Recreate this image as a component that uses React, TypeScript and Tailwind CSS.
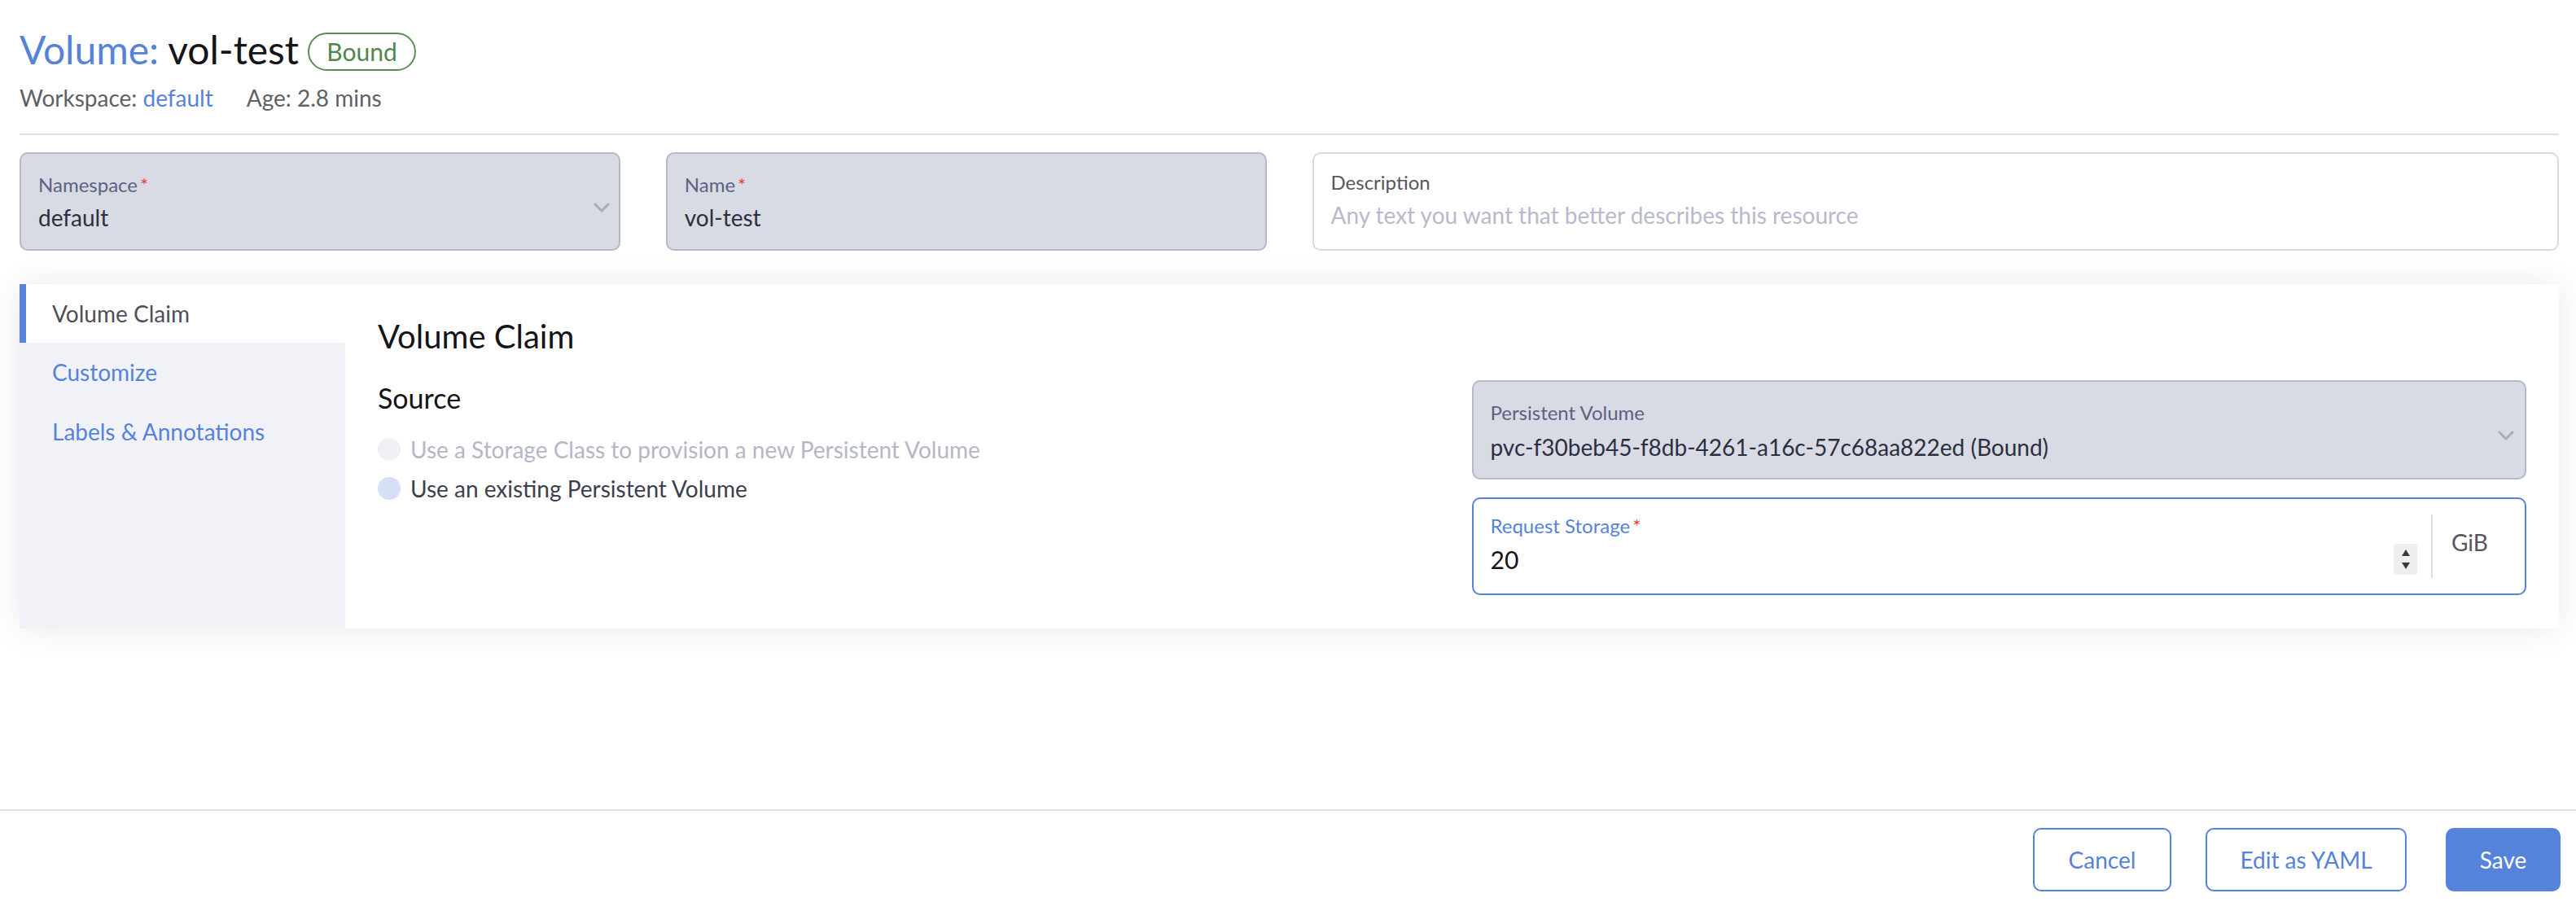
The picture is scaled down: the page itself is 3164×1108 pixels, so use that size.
import React from "react";

const Chevron = ({ className = "" }: { className?: string }) => (
  <svg width="20" height="12" viewBox="0 0 20 12" className={className} fill="none">
    <path d="M2 2 L10 10 L18 2" stroke="#a9abb8" strokeWidth="3" strokeLinecap="round" strokeLinejoin="round" />
  </svg>
);

export default function App() {
  return (
    <div className="w-[3164px] h-[1108px] bg-white flex flex-col font-['Lato','Noto_Sans',sans-serif] overflow-hidden">
      <div className="pl-6 pr-[21px]">
        {/* Title */}
        <div className="pt-[31px] flex items-center h-[91px] box-border">
          <h1 className="text-[48px] leading-[60px] font-normal">
            <span className="text-[#5683da]">Volume: </span>
            <span className="text-[#141419]">vol-test</span>
          </h1>
          <span className="ml-[11px] mt-[4px] inline-flex items-center justify-center h-[47px] w-[133px] rounded-full border-2 border-[#5b8c55] text-[#4f874a] text-[30px] leading-none">
            Bound
          </span>
        </div>
        <div className="mt-[11px] text-[28px] leading-[36px] text-[#5f6068] flex">
          <span>
            Workspace: <span className="text-[#5683da]">default</span>
          </span>
          <span className="ml-[41px]">Age: 2.8 mins</span>
        </div>
        <div className="mt-[26px] h-[2px] bg-[#dcdee7]" />

        {/* Top inputs */}
        <div className="mt-[21px] grid grid-cols-4 gap-x-[56px]">
          <div className="relative h-[121px] rounded-[10px] border-2 border-[#b5b8cb] bg-[#d8dae4] px-[21px] pt-[23px]">
            <div className="text-[24px] leading-[30px] text-[#5b6283]">
              Namespace<span className="text-[#e8413a] ml-[3px]">*</span>
            </div>
            <div className="mt-[7px] text-[28px] leading-[36px] text-[#2c2f40]">default</div>
            <Chevron className="absolute right-[11px] top-[60px]" />
          </div>
          <div className="h-[121px] rounded-[10px] border-2 border-[#b5b8cb] bg-[#d8dae4] px-[21px] pt-[23px]">
            <div className="text-[24px] leading-[30px] text-[#5b6283]">
              Name<span className="text-[#e8413a] ml-[3px]">*</span>
            </div>
            <div className="mt-[7px] text-[28px] leading-[36px] text-[#2c2f40]">vol-test</div>
          </div>
          <div className="col-span-2 h-[121px] rounded-[10px] border-2 border-[#d8dae3] bg-white px-[21px] pt-[20px]">
            <div className="text-[24px] leading-[30px] text-[#55565f]">Description</div>
            <div className="mt-[7px] text-[28px] leading-[36px] text-[#b7b9cc]">
              Any text you want that better describes this resource
            </div>
          </div>
        </div>

        {/* Card */}
        <div className="mt-[41px] flex bg-white shadow-[0_0_40px_rgba(20,20,60,0.09)]">
          <div className="w-[400px] shrink-0 bg-[#f1f2f7] flex flex-col">
            <div className="h-[72px] bg-white border-l-[8px] border-[#5683da] pl-[32px] flex items-center text-[28px] text-[#4f5058]">
              Volume Claim
            </div>
            <div className="h-[72px] pl-[40px] flex items-center text-[28px] text-[#5683da]">Customize</div>
            <div className="h-[74px] pl-[40px] flex items-center text-[28px] text-[#5683da]">
              Labels &amp; Annotations
            </div>
          </div>
          <div className="flex-1 px-10 pt-10 pb-[41px]">
            <h2 className="text-[40px] leading-[48px] text-[#141419] font-normal">Volume Claim</h2>
            <div className="mt-[30px] grid grid-cols-2 gap-x-12">
              <div>
                <h3 className="text-[34px] leading-[44px] text-[#141419] font-normal">Source</h3>
                <div className="mt-[17px] flex flex-col">
                  <div className="h-[48px] flex items-center">
                    <span className="w-[28px] h-[28px] rounded-full bg-[#f0f0f4]" />
                    <span className="ml-[12px] text-[28px] text-[#b5b7c6]">
                      Use a Storage Class to provision a new Persistent Volume
                    </span>
                  </div>
                  <div className="h-[48px] flex items-center">
                    <span className="w-[28px] h-[28px] rounded-full bg-[#d5dff6]" />
                    <span className="ml-[12px] text-[28px] text-[#3c3f4e]">Use an existing Persistent Volume</span>
                  </div>
                </div>
              </div>
              <div className="flex flex-col gap-[22px]">
                <div className="relative h-[122px] rounded-[10px] border-2 border-[#b5b8cb] bg-[#d8dae4] px-[21px] pt-[23px]">
                  <div className="text-[24px] leading-[30px] text-[#5b6283]">Persistent Volume</div>
                  <div className="mt-[9px] text-[28px] leading-[36px] text-[#2c2f40]">
                    pvc-f30beb45-f8db-4261-a16c-57c68aa822ed (Bound)
                  </div>
                  <Chevron className="absolute right-[13px] top-[60px]" />
                </div>
                <div className="h-[120px] rounded-[10px] border-2 border-[#5683da] bg-white flex items-stretch">
                  <div className="flex-1 pl-[21px] pt-[18px] relative">
                    <div className="text-[24px] leading-[30px] text-[#5683da]">
                      Request Storage<span className="text-[#e8413a] ml-[3px]">*</span>
                    </div>
                    <div className="mt-[8px] text-[30px] leading-[36px] text-[#141419]">20</div>
                    <div className="absolute right-[17px] top-[55px] w-[29px] h-[38px] bg-[#efeff1] rounded-[3px] flex flex-col items-center justify-center gap-[6px]">
                      <svg width="12" height="10" viewBox="0 0 12 10">
                        <path d="M6 1 L11 9 L1 9 Z" fill="#3a3a3a" />
                      </svg>
                      <svg width="12" height="10" viewBox="0 0 12 10">
                        <path d="M1 1 L11 1 L6 9 Z" fill="#3a3a3a" />
                      </svg>
                    </div>
                  </div>
                  <div className="my-[19px] w-[2px] bg-[#dcdde3]" />
                  <div className="w-[113px] pl-[23px] flex items-center pb-[10px] text-[28px] text-[#55565f]">GiB</div>
                </div>
              </div>
            </div>
          </div>
        </div>
      </div>

      {/* Footer */}
      <div className="mt-auto border-t-2 border-[#dcdee7] pt-[21px] pb-[13px] pr-[19px] flex justify-end">
        <button className="h-[78px] w-[170px] rounded-[10px] border-2 border-[#5683da] bg-white text-[28px] text-[#5683da]">
          Cancel
        </button>
        <button className="ml-[42px] h-[78px] w-[247px] rounded-[10px] border-2 border-[#5683da] bg-white text-[28px] text-[#5683da]">
          Edit as YAML
        </button>
        <button className="ml-[48px] h-[78px] w-[141px] rounded-[10px] bg-[#5683da] text-[28px] text-white">
          Save
        </button>
      </div>
    </div>
  );
}
